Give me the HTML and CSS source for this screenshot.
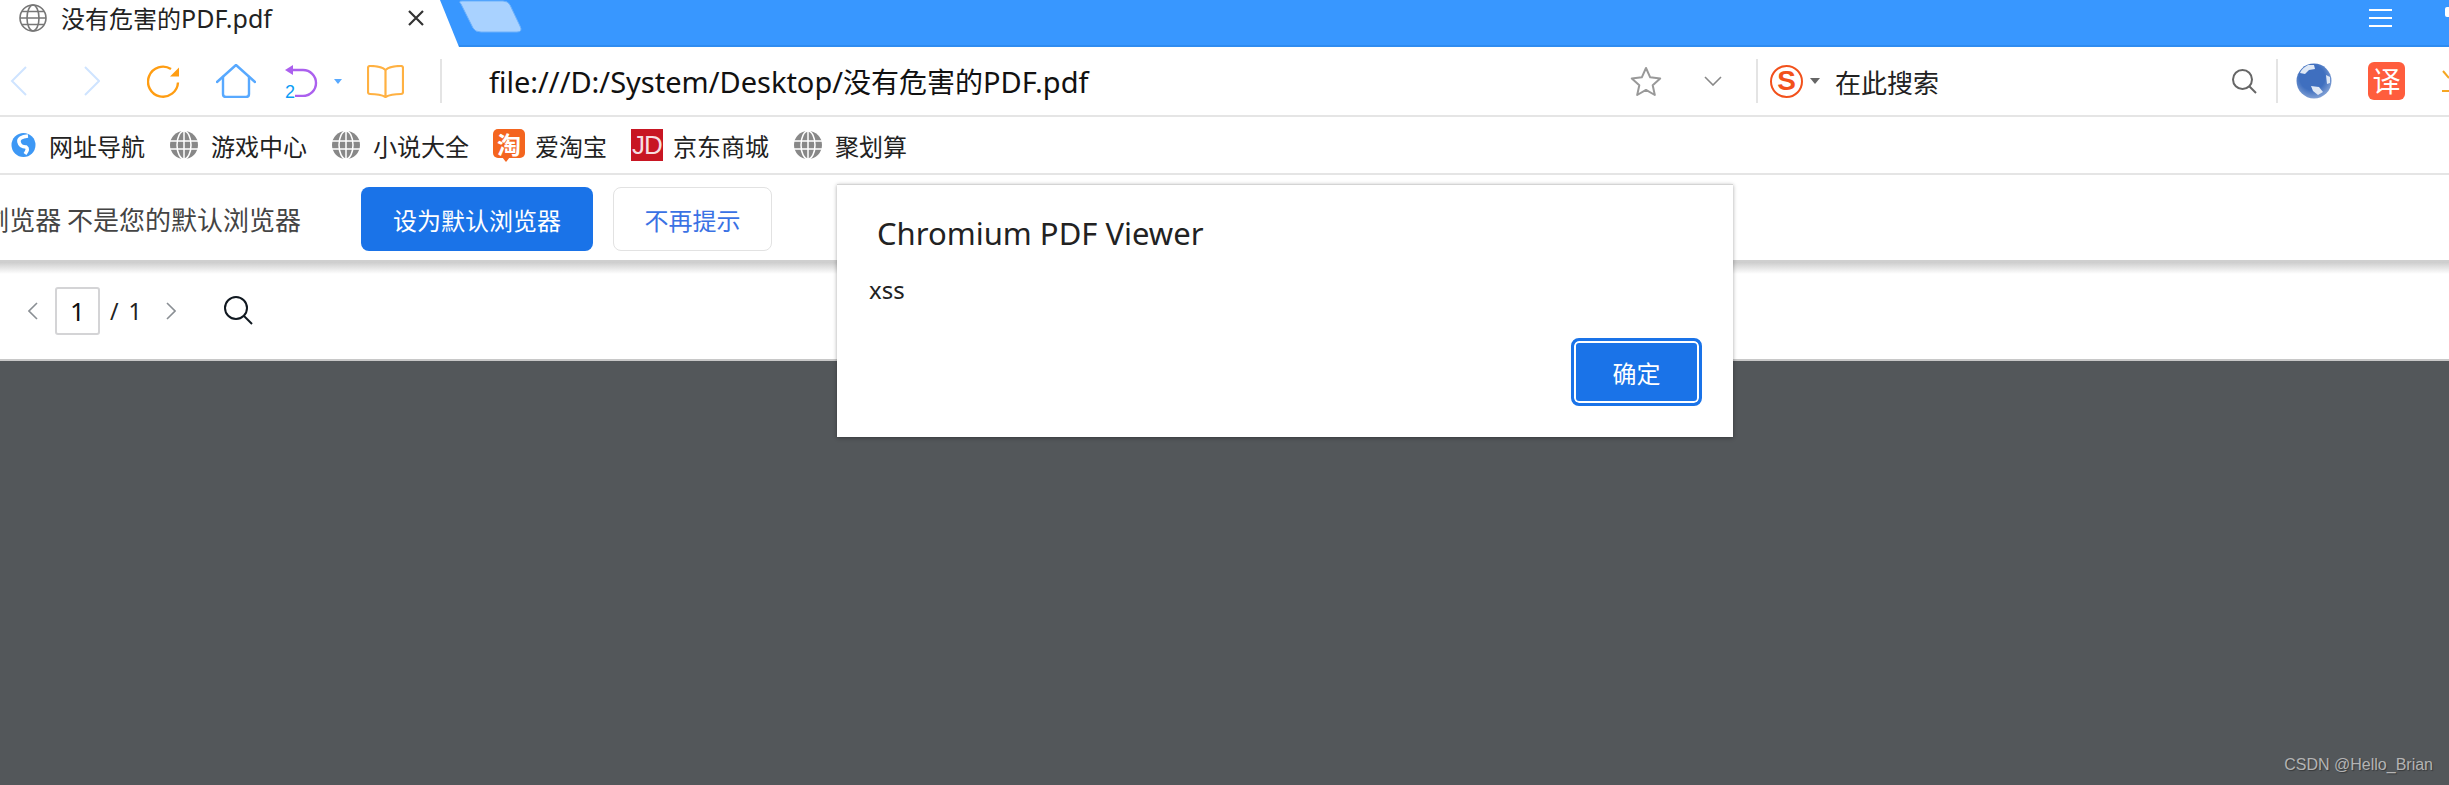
FILE: index.html
```html
<!DOCTYPE html>
<html lang="en">
<head>
    <meta charset="UTF-8">
    <meta name="viewport" content="width=device-width, initial-scale=1.0">
    <title>没有危害的PDF.pdf</title>
    <link rel="stylesheet" href="styles.css">
</head>
<body>
    <div class="browser">
        <div class="tabbar">
            <div class="tab">
                <svg class="tab-globe" width="28" height="28" viewBox="0 0 28 28" fill="none" stroke="#777" stroke-width="1.6">
                    <circle cx="14" cy="14" r="13"/>
                    <ellipse cx="14" cy="14" rx="6" ry="13"/>
                    <path d="M1 14h26M3 7.5h22M3 20.5h22"/>
                </svg>
                <span class="tab-title">没有危害的<span class="tab-latin">PDF.pdf</span></span>
                <svg class="tab-close" width="16" height="16" viewBox="0 0 16 16" stroke="#333" stroke-width="2.2">
                    <path d="M1 1l14 14M15 1L1 15"/>
                </svg>
            </div>
            <svg class="tab-edge" width="90" height="47" viewBox="0 0 90 47">
                <path d="M0 0h1l19 47H0z" fill="#fff"/>
                <path d="M22 3q-3-3 1-3h41q5 0 7 4l10 21q3 6-3 6H42q-6 0-8-4z" fill="#a9d2ff" stroke="#6db1fb" stroke-width="1" transform="translate(0 1)"/>
            </svg>
            <svg class="menu-icon" width="23" height="18" viewBox="0 0 23 18" stroke="#fff" stroke-width="2">
                <path d="M0 1h23M0 9h23M0 17h23"/>
            </svg>
            <div class="corner-mark"></div>
        </div>

        <div class="navbar">
            <svg class="nav-back" width="18" height="30" viewBox="0 0 18 30" fill="none" stroke="#cfe4ff" stroke-width="2"><path d="M16 1L2 15l14 14"/></svg>
            <svg class="nav-forward" width="16" height="30" viewBox="0 0 16 30" fill="none" stroke="#cfe4ff" stroke-width="2"><path d="M1 1l14 14L1 29"/></svg>
            <svg class="nav-reload" width="33" height="33" viewBox="0 0 33 33" fill="none">
                <path d="M24 4A15 15 0 1 0 31 17.500" stroke="#ff9d12" stroke-width="2.400"/>
                <path d="M32 2.500v9h-9z" fill="#ff9d12"/>
            </svg>
            <svg class="nav-home" width="40" height="34" viewBox="0 0 40 34" fill="none" stroke="#58a9ff" stroke-width="2.4" stroke-linejoin="round" stroke-linecap="round">
                <path d="M1 18L20 1l19 17"/>
                <path d="M7 13v17q0 3 3 3h20q3 0 3-3V13"/>
            </svg>
            <div class="nav-undo">
                <svg width="34" height="32" viewBox="0 0 34 32" fill="none">
                    <path d="M7 5h11a13 13 0 0 1 0 26h-8" stroke="#ab60ee" stroke-width="2.4"/>
                    <path d="M0 5l8-5v10z" fill="#ab60ee"/>
                </svg>
                <span class="undo-count">2</span>
            </div>
            <div class="nav-caret"></div>
            <svg class="nav-book" width="37" height="33" viewBox="0 0 37 33" fill="none" stroke="#ffb142" stroke-width="2.2" stroke-linejoin="round">
                <path d="M18.5 5Q14 1 3 1Q1 1 1 3v24q0 2 2 2q10 0 15.500 3q5.500-3 15.500-3q2 0 2-2V3q0-2-2-2Q23 1 18.500 5zv26"/>
            </svg>
            <div class="nav-sep nav-sep-url"></div>
            <div class="url"><span class="url-latin">file:///D:/System/Desktop/</span>没有危害的<span class="url-latin">PDF.pdf</span></div>
            <svg class="nav-star" width="32" height="30" viewBox="0 0 32 30" fill="none" stroke="#999" stroke-width="2" stroke-linejoin="round">
                <path d="M16 2l4.200 9.300 10 1.100-7.500 6.800 2.100 9.800L16 23.900 7.200 29l2.100-9.800-7.500-6.800 10-1.100z"/>
            </svg>
            <svg class="nav-chevron" width="18" height="10" viewBox="0 0 18 10" fill="none" stroke="#888" stroke-width="1.6"><path d="M1 1l8 8 8-8"/></svg>
            <div class="nav-sep nav-sep-search"></div>
            <div class="sogou"><span>S</span></div>
            <div class="search-caret"></div>
            <div class="search-label">在此搜索</div>
            <svg class="nav-search" width="25" height="25" viewBox="0 0 25 25" fill="none" stroke="#666" stroke-width="2">
                <circle cx="10.500" cy="10.500" r="9.500"/><path d="M17 17l7 7"/>
            </svg>
            <div class="nav-sep nav-sep-ext"></div>
            <svg class="ext-globe" width="36" height="36" viewBox="0 0 36 36">
                <defs>
                    <radialGradient id="globeFill" cx="0.45" cy="0.4" r="0.6">
                        <stop offset="0.6" stop-color="#3f6fbf"/>
                        <stop offset="1" stop-color="#7f9fd4"/>
                    </radialGradient>
                </defs>
                <circle cx="18" cy="18" r="17.500" fill="url(#globeFill)"/>
                <path d="M12 2Q6 5 4 10l5 1 4-4 6-1-1-4zM30 12l4 2v6l-3 1zM15 23l8 1 4 5-5 3-5-4z" fill="#dfe8f5"/>
            </svg>
            <div class="ext-translate">译</div>
            <svg class="ext-orange" width="7" height="22" viewBox="0 0 7 22" fill="none" stroke="#f5a623" stroke-width="2"><path d="M1 1l6 7M0 21h7"/></svg>
        </div>

        <div class="bookmarks">
            <div class="bookmark">
                <svg class="bm-logo" width="25" height="26" viewBox="0 0 25 26">
                    <circle cx="12.500" cy="13" r="12" fill="#3d98f5"/>
                    <path d="M17 4Q7 5 8 10t7 5q3 2-1 7" fill="none" stroke="#fff" stroke-width="3.600"/>
                </svg>
                <span>网址导航</span>
            </div>
            <div class="bookmark">
                <svg class="bm-globe" width="28" height="28" viewBox="0 0 28 28">
                    <circle cx="14" cy="14" r="14" fill="#888"/>
                    <path d="M0 10h28M0 18h28M14 0v28" stroke="#fff" stroke-width="1.500"/>
                    <ellipse cx="14" cy="14" rx="7" ry="14" fill="none" stroke="#fff" stroke-width="1.500"/>
                </svg>
                <span>游戏中心</span>
            </div>
            <div class="bookmark">
                <svg class="bm-globe" width="28" height="28" viewBox="0 0 28 28">
                    <circle cx="14" cy="14" r="14" fill="#888"/>
                    <path d="M0 10h28M0 18h28M14 0v28" stroke="#fff" stroke-width="1.500"/>
                    <ellipse cx="14" cy="14" rx="7" ry="14" fill="none" stroke="#fff" stroke-width="1.500"/>
                </svg>
                <span>小说大全</span>
            </div>
            <div class="bookmark bookmark-tao">
                <div class="bm-tao">淘</div>
                <span>爱淘宝</span>
            </div>
            <div class="bookmark bookmark-jd">
                <div class="bm-jd">JD</div>
                <span>京东商城</span>
            </div>
            <div class="bookmark">
                <svg class="bm-globe" width="28" height="28" viewBox="0 0 28 28">
                    <circle cx="14" cy="14" r="14" fill="#888"/>
                    <path d="M0 10h28M0 18h28M14 0v28" stroke="#fff" stroke-width="1.500"/>
                    <ellipse cx="14" cy="14" rx="7" ry="14" fill="none" stroke="#fff" stroke-width="1.500"/>
                </svg>
                <span>聚划算</span>
            </div>
        </div>

        <div class="notice">
            <div class="notice-text"><span>浏览器 不是您的默认浏览器</span></div>
            <button class="btn-primary">设为默认浏览器</button>
            <button class="btn-plain">不再提示</button>
        </div>

        <div class="pdf-toolbar">
            <svg class="pdf-prev" width="10" height="18" viewBox="0 0 10 18" fill="none" stroke="#8a8f94" stroke-width="1.600"><path d="M9 1L1 9l8 8"/></svg>
            <div class="page-input">1</div>
            <span class="page-total">/ 1</span>
            <svg class="pdf-next" width="10" height="18" viewBox="0 0 10 18" fill="none" stroke="#8a8f94" stroke-width="1.600"><path d="M1 1l8 8-8 8"/></svg>
            <svg class="pdf-search" width="30" height="29" viewBox="0 0 30 29" fill="none" stroke="#101820" stroke-width="2">
                <circle cx="13" cy="12" r="11"/><path d="M21 20l8 8"/>
            </svg>
        </div>

        <div class="viewer"></div>
    </div>

    <div class="dialog">
        <div class="dialog-title">Chromium PDF Viewer</div>
        <div class="dialog-msg">xss</div>
        <div class="dialog-actions">
            <button class="dialog-ok">确定</button>
        </div>
    </div>

    <div class="watermark">CSDN @Hello_Brian</div>
</body>
</html>
```

FILE: styles.css
```css
html, body {
    margin: 0;
    height: 100%;
    overflow: hidden;
}

body {
    font-family: "Open Sans", "Noto Sans CJK SC", sans-serif;
    background-color: #53575a;
    color: #222;
}

svg {
    display: block;
    flex: none;
}

button {
    font-family: inherit;
    cursor: pointer;
}

.browser {
    display: flex;
    flex-direction: column;
    height: 785px;
}

/* tab strip */
.tabbar {
    display: flex;
    align-items: flex-start;
    height: 47px;
    background-color: #3897ff;
    background-image: linear-gradient(#2f8cf0, #2f8cf0);
    background-size: 100% 2px;
    background-position: bottom;
    background-repeat: no-repeat;
    overflow: hidden;
}

.tab {
    display: flex;
    align-items: center;
    width: 441px;
    height: 47px;
    box-sizing: border-box;
    padding: 0 15px 12px 19px;
    background-color: #fff;
}

.tab-title {
    margin-left: 14px;
    font-family: "Noto Sans CJK SC", sans-serif;
    font-size: 24px;
    color: #222;
    white-space: nowrap;
}

.tab-latin {
    font-family: "Noto Sans", sans-serif;
    font-size: 25px;
}

.tab-close {
    margin-left: auto;
}

.menu-icon {
    margin: 9px 0 0 1840px;
}

.corner-mark {
    width: 4px;
    height: 10px;
    margin: 7px 0 0 53px;
    border-radius: 2px 0 0 2px;
    background-color: #fff;
}

/* address bar */
.navbar {
    display: flex;
    align-items: center;
    height: 68px;
    background-color: #fff;
}

.nav-back { margin-left: 10px; }
.nav-forward { margin-left: 56px; }
.nav-reload { margin-left: 47px; }
.nav-home { margin-left: 36px; }

.nav-undo {
    position: relative;
    margin-left: 29px;
}

.undo-count {
    position: absolute;
    left: 0;
    bottom: -4px;
    font-family: "Liberation Sans", sans-serif;
    font-size: 18px;
    line-height: 18px;
    color: #0a9cf5;
}

.nav-caret {
    width: 0;
    height: 0;
    margin-left: 15px;
    border-left: 4px solid transparent;
    border-right: 4px solid transparent;
    border-top: 5px solid #58a9ff;
}

.nav-book { margin-left: 25px; }

.nav-sep {
    width: 2px;
    height: 44px;
    background-color: #e4e4e4;
}

.nav-sep-url { margin-left: 36px; }

.url {
    width: 1141px;
    flex: none;
    margin-left: 47px;
    font-family: "Noto Sans CJK SC", sans-serif;
    font-size: 28px;
    color: #111;
    white-space: nowrap;
}

.url-latin {
    font-family: "Noto Sans", sans-serif;
    font-size: 29px;
}

.nav-chevron { margin-left: 42px; }
.nav-sep-search { margin-left: 34px; }

.sogou {
    display: flex;
    align-items: center;
    justify-content: center;
    width: 33px;
    height: 33px;
    margin-left: 12px;
    box-sizing: border-box;
    border: 2px solid #f2511b;
    border-radius: 50%;
    font-family: "Liberation Sans", sans-serif;
    font-weight: bold;
    font-size: 28px;
    color: #f2511b;
}

.search-caret {
    width: 0;
    height: 0;
    margin-left: 7px;
    border-left: 5px solid transparent;
    border-right: 5px solid transparent;
    border-top: 6px solid #666;
}

.search-label {
    width: 397px;
    margin-left: 15px;
    font-family: "Noto Sans CJK SC", sans-serif;
    font-size: 26px;
    color: #222;
}

.nav-sep-ext { margin-left: 19px; }
.ext-globe { margin-left: 18px; }

.ext-translate {
    width: 37px;
    height: 38px;
    margin-left: 36px;
    border-radius: 6px;
    background-color: #ff5d3d;
    color: #fff;
    font-family: "Noto Sans CJK SC", sans-serif;
    font-size: 28px;
    line-height: 36px;
    text-align: center;
}

.ext-orange { margin-left: 37px; }

/* bookmarks */
.bookmarks {
    display: flex;
    align-items: center;
    height: 60px;
    box-sizing: border-box;
    padding-left: 11px;
    gap: 25px;
    background-color: #fff;
    border-top: 2px solid #e5e5e5;
    border-bottom: 2px solid #e5e5e5;
}

.bookmark {
    display: flex;
    align-items: center;
    gap: 13px;
    font-family: "Noto Sans CJK SC", sans-serif;
    font-size: 24px;
    color: #222;
    white-space: nowrap;
}

.bookmark-tao {
    gap: 10px;
    margin-left: -1px;
}

.bookmark-jd {
    gap: 10px;
    margin-left: -1px;
}

.bm-tao, .bm-jd {
    display: flex;
    align-items: center;
    justify-content: center;
    width: 32px;
    box-sizing: border-box;
    color: #fff;
}

.bm-tao {
    position: relative;
    height: 29px;
    margin-bottom: 3px;
    border-radius: 5px;
    background-color: #f4651f;
    font-family: "Noto Sans CJK SC", sans-serif;
    font-size: 24px;
    font-weight: bold;
}

/* little speech bubble tail */
.bm-tao::after {
    content: "";
    position: absolute;
    left: 9px;
    bottom: -4px;
    border-left: 4px solid transparent;
    border-right: 4px solid transparent;
    border-top: 5px solid #f4651f;
}

.bm-jd {
    height: 32px;
    background-color: #c81623;
    font-family: "Liberation Sans", sans-serif;
    font-size: 26px;
    letter-spacing: -1px;
    color: #f7dfe1;
}

/* default browser notice */
.notice {
    display: flex;
    align-items: center;
    height: 85px;
    box-sizing: border-box;
    padding-top: 3px;
    background-color: #fff;
    overflow: hidden;
}

.notice-text {
    display: flex;
    justify-content: flex-end;
    width: 301px;
    flex: none;
    overflow: hidden;
    font-family: "Noto Sans CJK SC", sans-serif;
    font-size: 26px;
    line-height: 36px;
    white-space: nowrap;
    color: #444;
}

.notice-text span {
    flex: none;
}

.btn-primary, .btn-plain {
    height: 64px;
    box-sizing: border-box;
    border-radius: 8px;
    font-family: "Noto Sans CJK SC", sans-serif;
    font-size: 24px;
}

.btn-primary {
    width: 232px;
    margin-left: 60px;
    border: none;
    background-color: #1a73e8;
    color: #fff;
}

.btn-plain {
    width: 159px;
    margin-left: 20px;
    border: 1px solid #e2e2e2;
    background-color: #fff;
    color: #3a72e4;
}

/* pdf viewer toolbar */
.pdf-toolbar {
    display: flex;
    align-items: center;
    height: 101px;
    box-sizing: border-box;
    background-color: #fff;
    border-top: 2px solid #cfcfcf;
    border-bottom: 2px solid #c8c8c8;
    background-image: linear-gradient(#cccccc, #fff 12px);
    background-repeat: no-repeat;
}

.pdf-prev { margin-left: 28px; }

.page-input {
    width: 45px;
    height: 48px;
    margin-left: 17px;
    box-sizing: border-box;
    border: 2px solid #d4d4d6;
    border-radius: 3px;
    font-family: "Noto Sans", sans-serif;
    font-size: 26px;
    line-height: 44px;
    text-align: center;
    color: #111;
}

.page-total {
    margin-left: 10px;
    width: 56px;
    font-family: "Noto Sans", sans-serif;
    font-size: 23px;
    word-spacing: 4px;
    color: #222;
}

.pdf-search { margin-left: 47px; }

.viewer {
    flex: 1;
    background-color: #53575a;
}

/* alert dialog, sits over the page */
.dialog {
    position: absolute;
    left: 837px;
    top: 184px;
    width: 896px;
    height: 253px;
    box-sizing: border-box;
    padding: 27px 31px 0 32px;
    background-color: #fff;
    border-top: 1px solid #d4d4d4;
    box-shadow: 0 1px 4px rgba(0, 0, 0, 0.35);
}

.dialog-title {
    margin-left: 8px;
    font-family: "Noto Sans", sans-serif;
    font-size: 31px;
    line-height: 42px;
    color: #222;
}

.dialog-msg {
    margin-top: 18px;
    font-family: "Noto Sans", sans-serif;
    font-size: 24px;
    line-height: 36px;
    color: #222;
}

.dialog-actions {
    display: flex;
    justify-content: flex-end;
    margin-top: 30px;
}

.dialog-ok {
    width: 131px;
    height: 68px;
    box-sizing: border-box;
    border: 3px solid #1a73e8;
    border-radius: 8px;
    background-color: #1a73e8;
    box-shadow: inset 0 0 0 2px #fff;
    color: #fff;
    font-family: "Noto Sans CJK SC", sans-serif;
    font-size: 24px;
}

.watermark {
    position: absolute;
    right: 16px;
    bottom: 11px;
    font-family: "Liberation Sans", sans-serif;
    font-size: 16px;
    color: #b4b4b4;
    text-shadow: 1px 1px 1px rgba(0, 0, 0, 0.35);
}
```
